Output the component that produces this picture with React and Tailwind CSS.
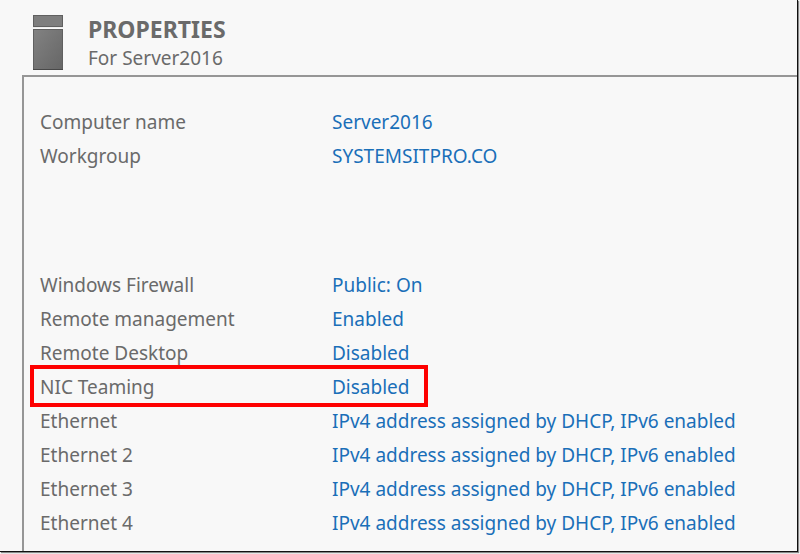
const systemRows = [
    { label: "Computer name", value: "Server2016" },
    { label: "Workgroup", value: "SYSTEMSITPRO.CO" },
];

const networkRows = [
    { label: "Windows Firewall", value: "Public: On" },
    { label: "Remote management", value: "Enabled" },
    { label: "Remote Desktop", value: "Disabled" },
    { label: "NIC Teaming", value: "Disabled", highlighted: true },
    { label: "Ethernet", value: "IPv4 address assigned by DHCP, IPv6 enabled" },
    { label: "Ethernet 2", value: "IPv4 address assigned by DHCP, IPv6 enabled" },
    { label: "Ethernet 3", value: "IPv4 address assigned by DHCP, IPv6 enabled" },
    { label: "Ethernet 4", value: "IPv4 address assigned by DHCP, IPv6 enabled" },
];

function ServerIcon() {
    return (
        <svg className="w-[30px] h-[56px] shrink-0" viewBox="0 0 30 56" aria-hidden="true">
            <defs>
                <linearGradient id="tower" x1="0" y1="0" x2="1" y2="1">
                    <stop offset="0" stopColor="#828282" />
                    <stop offset="1" stopColor="#666666" />
                </linearGradient>
            </defs>
            <rect x="0.5" y="0.5" width="29" height="11" fill="#7e7e7e" stroke="#606060" />
            <rect x="0.5" y="14.5" width="29" height="40" fill="url(#tower)" stroke="#606060" />
            <path d="M0 12.5H30" stroke="#ececec" />
            <path d="M0 54.5H30" stroke="#484848" />
        </svg>
    );
}

function PropertyTable({ rows }) {
    return (
        <table className="w-full table-fixed border-collapse text-left">
            <tbody>
                {rows.map((row) => (
                    <tr key={row.label} className="h-[34px]">
                        <th scope="row" className="relative w-[292px] p-0 font-normal text-[#6a6a6a]">
                            {row.label}
                            {row.highlighted && (
                                <span className="pointer-events-none absolute -left-[10px] -top-[5px] h-[42px] w-[398px] border-4 border-[#fe0000]" />
                            )}
                        </th>
                        <td className="p-0 whitespace-nowrap">
                            <a href="#" className="text-[#1a6fb8] hover:underline">
                                {row.value}
                            </a>
                        </td>
                    </tr>
                ))}
            </tbody>
        </table>
    );
}

export default function App() {
    return (
        <div className="min-h-screen flex flex-col bg-[#f8f8f8] pr-[2px] pb-[2px] font-['Noto_Sans',sans-serif] text-[19px] leading-[30px]">
            <main className="flex-1 flex flex-col bg-[#f8f8f8] border-r border-b border-[#111111] pl-[22px] shadow-[1px_1px_1px_#888888]">
                <header className="flex items-start gap-[25px] pl-[11px] pt-[15px] pb-[2px] text-[#6a6a6a]">
                    <ServerIcon />
                    <div>
                        <h1 className="text-[23px] leading-[28px] font-bold">PROPERTIES</h1>
                        <p>For Server2016</p>
                    </div>
                </header>

                <section className="flex-1 flex flex-col gap-[95px] border-t-2 border-l-2 border-[#969696] pl-4 pt-[28px] pb-2">
                    <PropertyTable rows={systemRows} />
                    <PropertyTable rows={networkRows} />
                </section>
            </main>
        </div>
    );
}
